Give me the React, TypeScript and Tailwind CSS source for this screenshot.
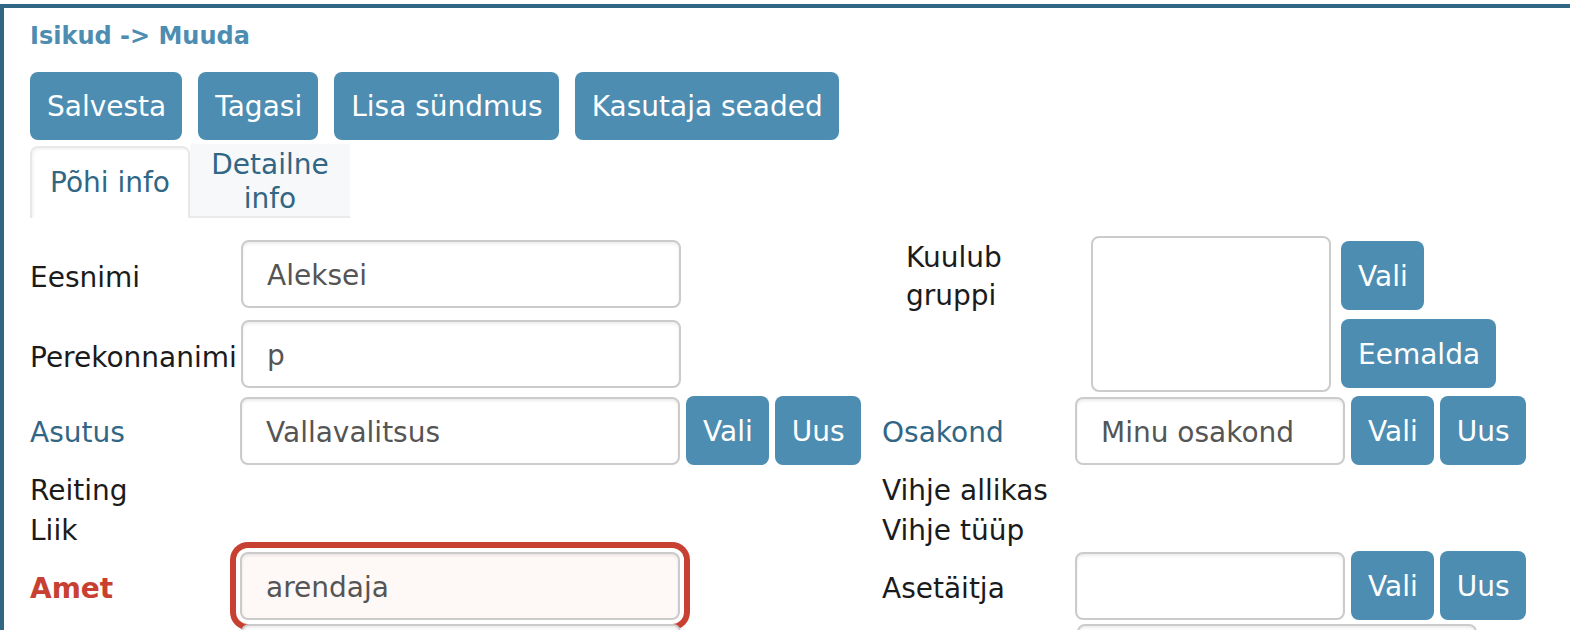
import type { ReactNode } from "react";
import clsx from "clsx";

const actions = ["Salvesta", "Tagasi", "Lisa sündmus", "Kasutaja seaded"];

const inputShadow = "shadow-[inset_0_2px_3px_rgba(0,0,0,0.08)]";
const errorShadow =
  "shadow-[inset_0_2px_3px_rgba(0,0,0,0.08),0_0_0_4px_#ffffff,0_0_0_10px_#c74031]";

function Button({
  children,
  height = "h-[69px]",
}: {
  children: ReactNode;
  height?: string;
}) {
  return (
    <button
      type="button"
      className={clsx(
        "shrink-0 rounded-lg bg-[#4d8db1] pt-0.5 pr-4 pl-[17px] whitespace-nowrap text-white",
        height
      )}
    >
      {children}
    </button>
  );
}

function Label({
  id,
  children,
  className,
}: {
  id: string;
  children: ReactNode;
  className?: string;
}) {
  return (
    <label
      htmlFor={id}
      className={clsx("shrink-0 leading-9 whitespace-nowrap", className)}
    >
      {children}
    </label>
  );
}

function TextInput({
  id,
  value,
  error,
  className,
}: {
  id: string;
  value?: string;
  error?: boolean;
  className: string;
}) {
  return (
    <input
      id={id}
      type="text"
      defaultValue={value}
      aria-invalid={error}
      className={clsx(
        "h-[68px] shrink-0 rounded-lg border-2 border-[#cbcbcb] px-6 pt-0.5 text-[#555555] outline-none",
        error ? errorShadow : inputShadow,
        error ? "bg-[#fef9f6]" : "bg-white",
        className
      )}
    />
  );
}

export default function App() {
  return (
    <div className="h-screen overflow-hidden bg-white pt-1 font-['Verdana','DejaVu_Sans',sans-serif] text-[28px] text-[#1b1b1b]">
      <main className="h-full border-t-4 border-l-4 border-[#316685] pl-[26px]">
        <h1 className="pt-3 text-2xl leading-8 font-bold text-[#4d8db1]">
          Isikud -&gt; Muuda
        </h1>

        <div className="mt-5 flex gap-4">
          {actions.map((action) => (
            <Button key={action} height="h-[68px]">
              {action}
            </Button>
          ))}
        </div>

        {/* Tabs */}
        <div role="tablist" className="mt-1 flex h-[74px] items-end leading-[34px] text-[#316685]">
          <button
            type="button"
            role="tab"
            aria-selected="true"
            className="h-[72px] w-40 rounded-t-lg border-2 border-b-0 border-[#e8e8e8] bg-white whitespace-nowrap shadow-[inset_2px_2px_2px_rgba(0,0,0,0.04)]"
          >
            Põhi info
          </button>
          <button
            type="button"
            role="tab"
            aria-selected="false"
            className="h-full w-40 border-b-2 border-[#e8eaec] bg-[#f6f8fa] px-4 pt-1"
          >
            Detailne info
          </button>
        </div>

        {/* Form */}
        <form className="mt-[18px] grid grid-cols-[minmax(0,852fr)_minmax(0,688fr)]">
          <div className="flex flex-col gap-3 pt-1">
            <div className="flex items-center">
              <Label id="eesnimi" className="w-[211px] pt-2">Eesnimi</Label>
              <TextInput id="eesnimi" value="Aleksei" className="w-[440px]" />
            </div>
            <div className="flex items-center">
              <Label id="perekonnanimi" className="w-[211px] pt-2">Perekonnanimi</Label>
              <TextInput id="perekonnanimi" value="p" className="w-[440px]" />
            </div>
          </div>
          <div className="flex h-40 items-start pl-6">
            <label htmlFor="grupp" className="w-[185px] shrink-0 pt-[3px] leading-[38px]">
              Kuulub
              <br />
              gruppi
            </label>
            <select
              id="grupp"
              multiple
              className="h-[156px] w-60 shrink-0 rounded-lg border-2 border-[#cbcbcb] bg-white"
            />
            <div className="flex flex-col items-start gap-[9px] pt-[5px] pl-2.5">
              <Button>Vali</Button>
              <Button>Eemalda</Button>
            </div>
          </div>

          <div className="flex h-[73px] items-start gap-1.5">
            <div className="flex items-center pt-px">
              <Label id="asutus" className="w-[210px] pt-1">
                <a href="#asutus" className="text-[#316685]">Asutus</a>
              </Label>
              <TextInput id="asutus" value="Vallavalitsus" className="w-[440px]" />
            </div>
            <Button>Vali</Button>
            <Button>Uus</Button>
          </div>
          <div className="flex h-[73px] items-start gap-1.5">
            <div className="flex items-center pt-px">
              <Label id="osakond" className="w-[193px] pt-1">
                <a href="#osakond" className="text-[#316685]">Osakond</a>
              </Label>
              <TextInput id="osakond" value="Minu osakond" className="w-[270px]" />
            </div>
            <Button>Vali</Button>
            <Button>Uus</Button>
          </div>

          <div className="pt-0.5 leading-[40px]">Reiting</div>
          <div className="pt-0.5 leading-[40px]">Vihje allikas</div>
          <div className="leading-[40px]">Liik</div>
          <div className="leading-[40px]">Vihje tüüp</div>

          <div className="flex h-[73px] items-start pt-px">
            <div className="flex items-center">
              <Label id="amet" className="w-[210px] pt-1.5 font-bold text-[#c74031]">Amet</Label>
              <TextInput id="amet" value="arendaja" error className="w-[440px]" />
            </div>
          </div>
          <div className="flex h-[73px] items-start gap-1.5">
            <div className="flex items-center pt-px">
              <Label id="asetaitja" className="w-[193px] pt-1.5">Asetäitja</Label>
              <TextInput id="asetaitja" className="w-[270px]" />
            </div>
            <Button>Vali</Button>
            <Button>Uus</Button>
          </div>

          <div className="pl-[211px]">
            <input
              type="text"
              aria-label="Telefon"
              className={clsx("h-[68px] w-[440px] rounded-lg border-2 border-[#cbcbcb] bg-white", inputShadow)}
            />
          </div>
          <div className="pl-[195px]">
            <input
              type="text"
              aria-label="E-post"
              className={clsx("h-[68px] w-[400px] rounded-lg border-2 border-[#cbcbcb] bg-white", inputShadow)}
            />
          </div>
        </form>
      </main>
    </div>
  );
}
